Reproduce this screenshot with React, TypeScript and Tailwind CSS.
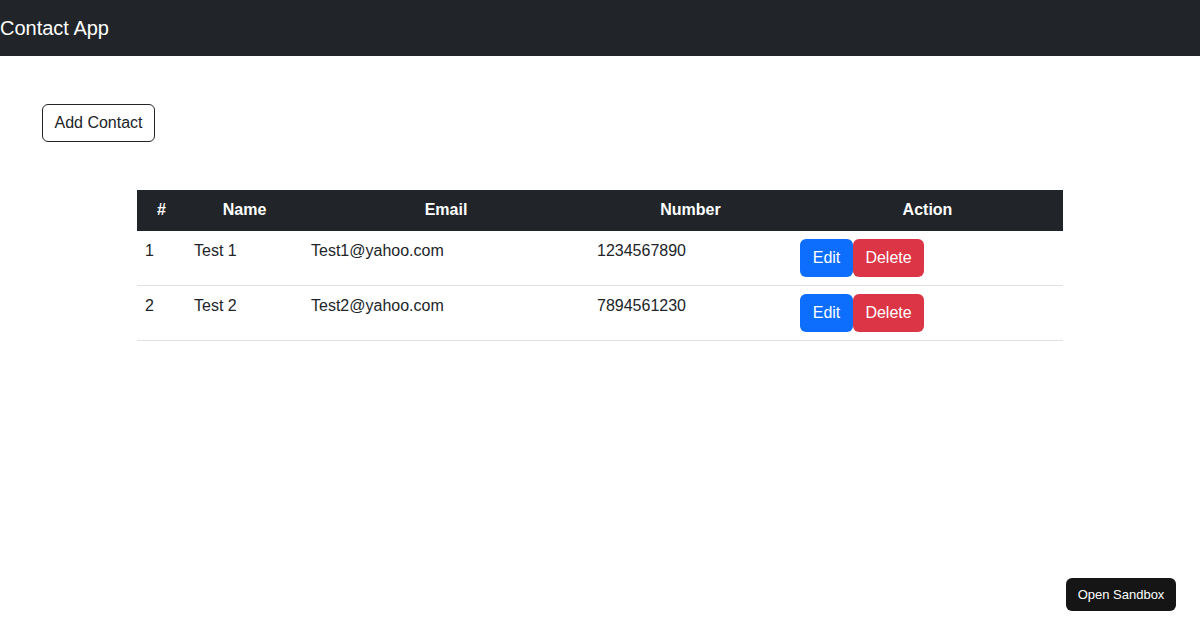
const contacts = [
  { id: 1, name: 'Test 1', email: 'Test1@yahoo.com', number: '1234567890' },
  { id: 2, name: 'Test 2', email: 'Test2@yahoo.com', number: '7894561230' },
]

export default function App() {
  return (
    <div className="min-h-[630px] bg-white text-[#212529] text-base" style={{ fontFamily: '"Liberation Sans", Arial, sans-serif' }}>
      <nav className="h-14 bg-[#212529] flex items-center">
        <span className="text-xl text-white leading-[30px]">Contact App</span>
      </nav>

      <div className="pt-12 pl-[42px]">
        <button className="h-[38px] w-[113px] border border-[#212529] rounded-md text-base text-[#212529] bg-white leading-6">
          Add Contact
        </button>
      </div>

      <div className="mt-12 flex justify-center">
        <table className="w-[926px] table-fixed border-collapse">
          <colgroup>
            <col className="w-[49px]" />
            <col className="w-[117px]" />
            <col className="w-[286px]" />
            <col className="w-[203px]" />
            <col className="w-[271px]" />
          </colgroup>
          <thead>
            <tr className="bg-[#212529] text-white border-b border-[#212529]">
              <th className="h-10 p-2 font-bold text-center leading-6">#</th>
              <th className="h-10 p-2 font-bold text-center leading-6">Name</th>
              <th className="h-10 p-2 font-bold text-center leading-6">Email</th>
              <th className="h-10 p-2 font-bold text-center leading-6">Number</th>
              <th className="h-10 p-2 font-bold text-center leading-6">Action</th>
            </tr>
          </thead>
          <tbody>
            {contacts.map((c) => (
              <tr key={c.id} className="border-b border-[#dee2e6]">
                <td className="px-2 pt-2 align-top leading-6">{c.id}</td>
                <td className="px-2 pt-2 align-top leading-6">{c.name}</td>
                <td className="px-2 pt-2 align-top leading-6">{c.email}</td>
                <td className="px-2 pt-2 align-top leading-6">{c.number}</td>
                <td className="px-2 py-2 align-top">
                  <div className="flex">
                    <button className="h-[38px] w-[53px] rounded-md bg-[#0d6efd] text-white leading-6">Edit</button>
                    <button className="h-[38px] w-[71px] rounded-md bg-[#dc3545] text-white leading-6">Delete</button>
                  </div>
                </td>
              </tr>
            ))}
          </tbody>
        </table>
      </div>

      <button className="fixed right-6 bottom-[19px] h-[33px] w-[110px] rounded-md bg-[#151515] text-[13px] text-white">
        Open Sandbox
      </button>
    </div>
  )
}
